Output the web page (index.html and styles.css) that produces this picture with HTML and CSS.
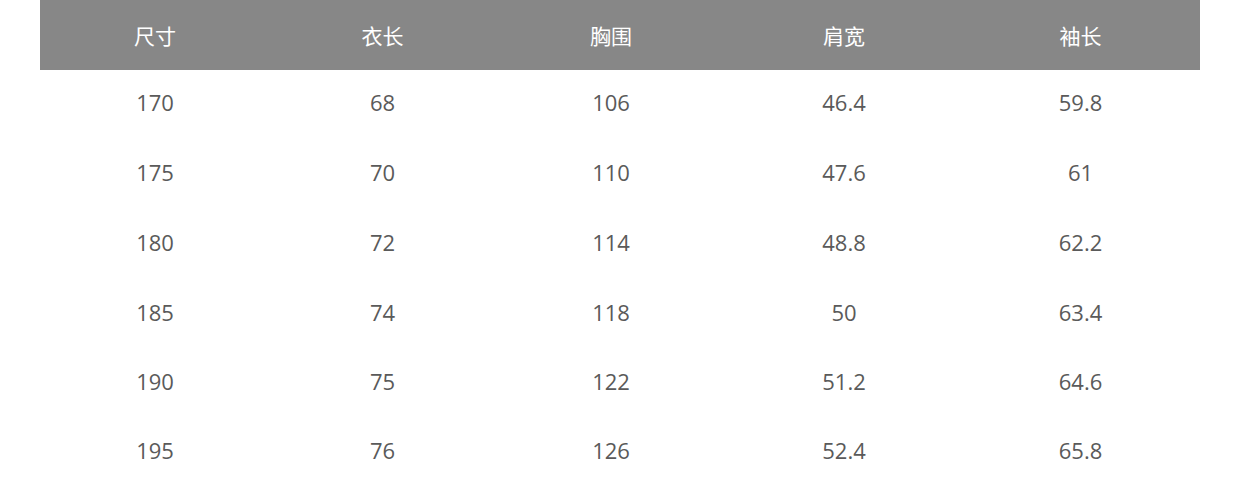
FILE: index.html
```html
<!DOCTYPE html>
<html lang="zh-CN">
<head>
<meta charset="utf-8">
<title>尺码表</title>
<link rel="stylesheet" href="styles.css">
</head>
<body>
<div class="size-table">
  <div class="row head">
    <div class="cell">尺寸</div><div class="cell">衣长</div><div class="cell">胸围</div><div class="cell">肩宽</div><div class="cell">袖长</div>
  </div>
  <div class="row">
    <div class="cell">170</div><div class="cell">68</div><div class="cell">106</div><div class="cell">46.4</div><div class="cell">59.8</div>
  </div>
  <div class="row">
    <div class="cell">175</div><div class="cell">70</div><div class="cell">110</div><div class="cell">47.6</div><div class="cell">61</div>
  </div>
  <div class="row">
    <div class="cell">180</div><div class="cell">72</div><div class="cell">114</div><div class="cell">48.8</div><div class="cell">62.2</div>
  </div>
  <div class="row">
    <div class="cell">185</div><div class="cell">74</div><div class="cell">118</div><div class="cell">50</div><div class="cell">63.4</div>
  </div>
  <div class="row short">
    <div class="cell">190</div><div class="cell">75</div><div class="cell">122</div><div class="cell">51.2</div><div class="cell">64.6</div>
  </div>
  <div class="row">
    <div class="cell">195</div><div class="cell">76</div><div class="cell">126</div><div class="cell">52.4</div><div class="cell">65.8</div>
  </div>
</div>
</body>
</html>
```
FILE: styles.css
```css
html, body {
  margin: 0;
  padding: 0;
  background: #ffffff;
}
body {
  padding: 0 40px;
  font-family: "Open Sans", "Noto Sans CJK SC", sans-serif;
  color: #5a5a5a;
}
.size-table {
  width: 1160px;
}
.row {
  display: grid;
  grid-template-columns: 230px 225px 232px 234px 239px;
  box-sizing: border-box;
  height: 70px;
  padding-bottom: 6px;
  align-items: center;
  font-size: 22px;
}
.row.short {
  height: 68px;
}
.row.head {
  background: #878787;
  color: #ffffff;
  font-family: "Noto Sans CJK SC", sans-serif;
  font-size: 21px;
  height: 70px;
  padding-bottom: 0;
}
.cell {
  text-align: center;
  line-height: 1;
}
```
